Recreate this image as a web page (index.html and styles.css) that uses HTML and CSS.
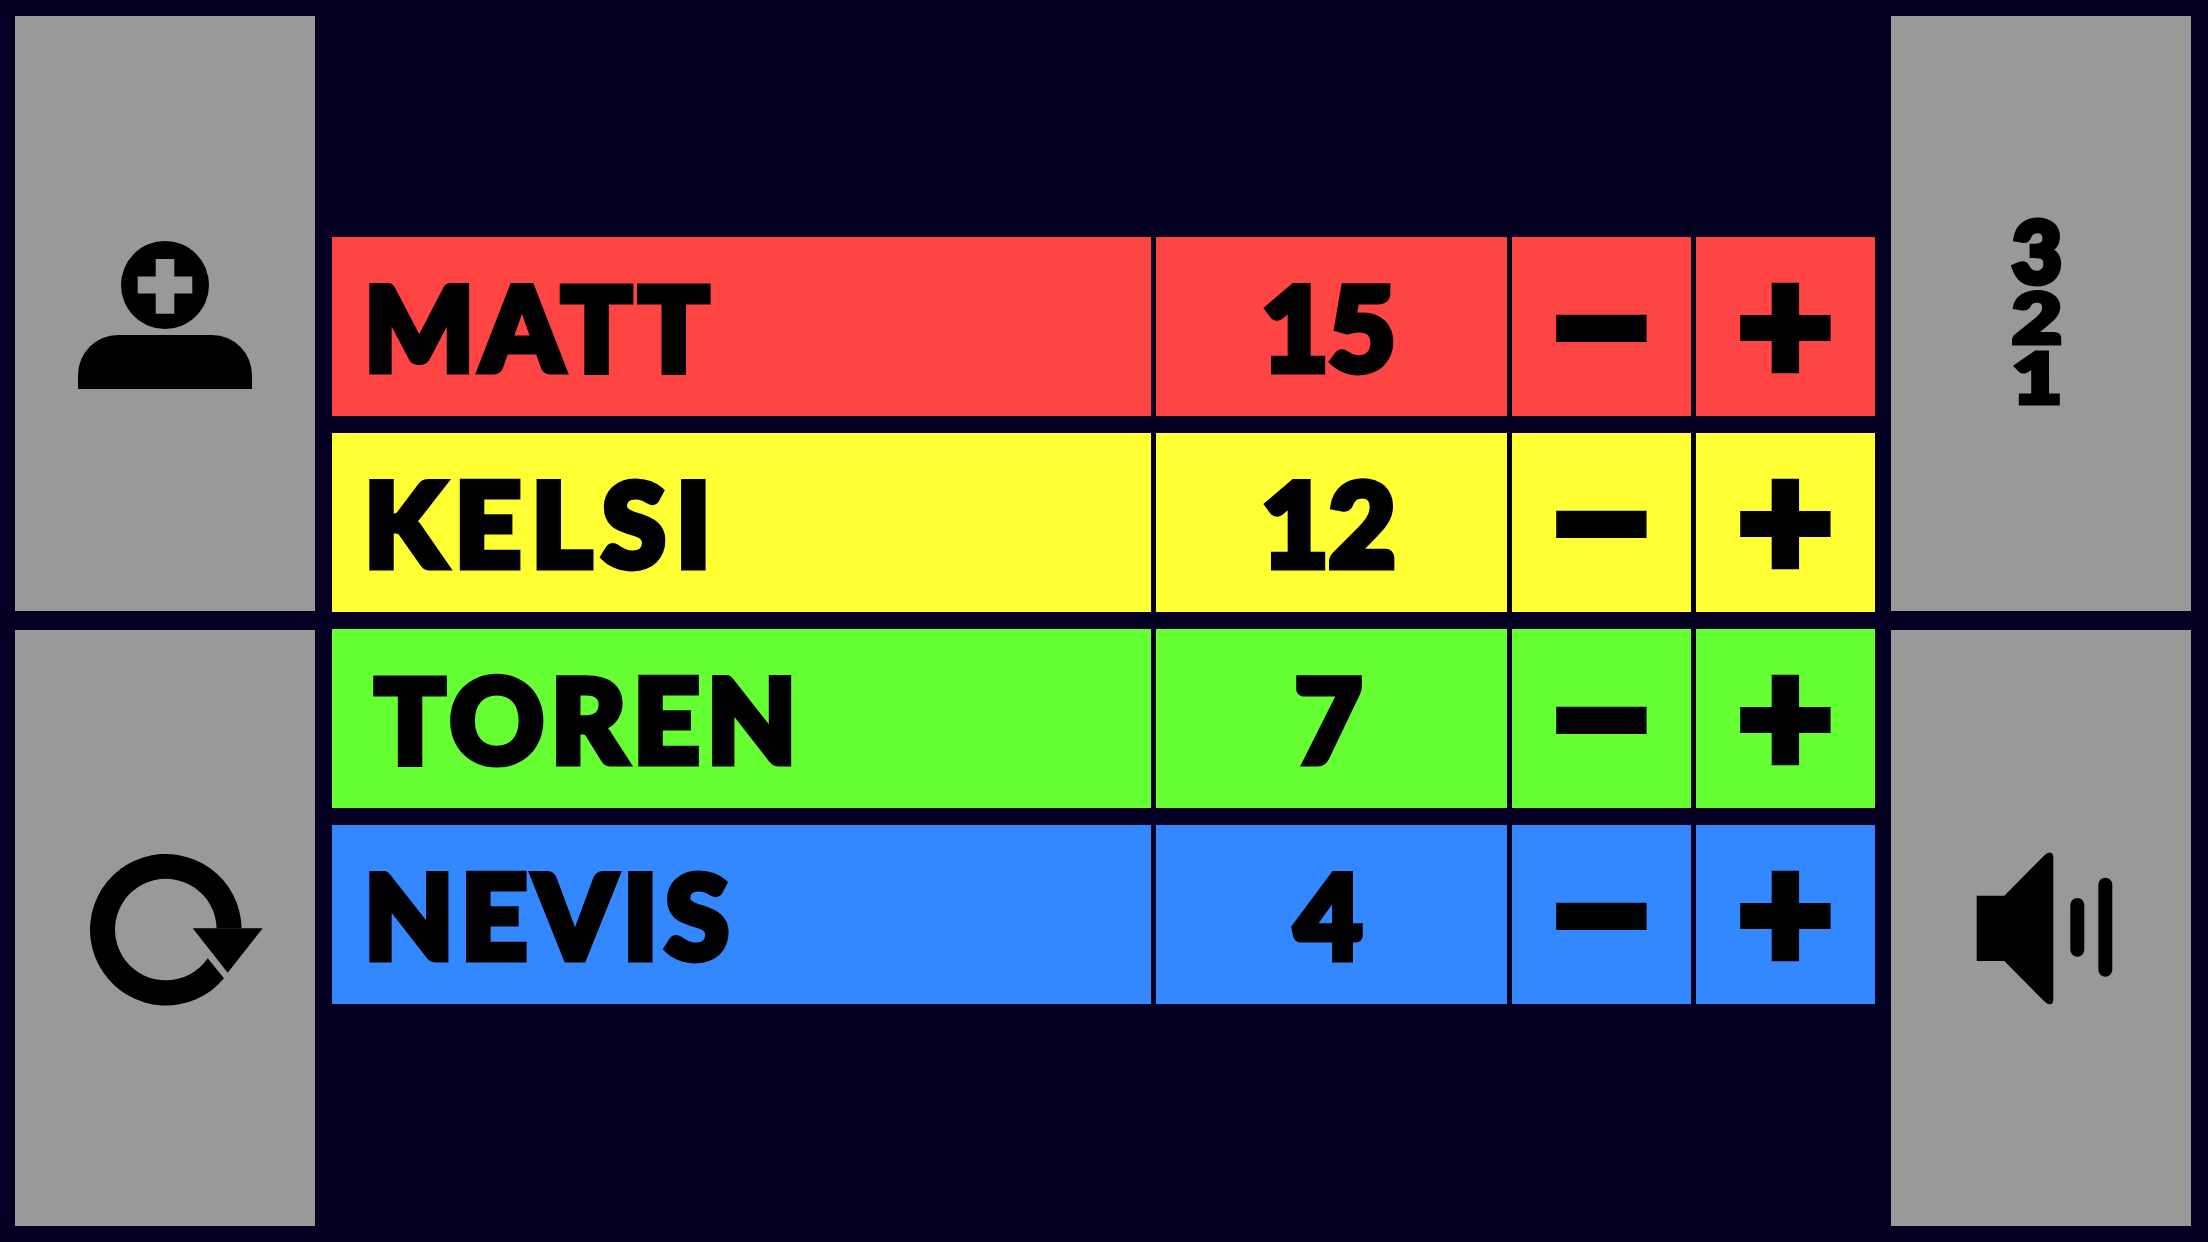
FILE: index.html
```html
<!DOCTYPE html>
<html lang="en">
    <head>
        <meta charset="UTF-8">
        <title>Scoreboard</title>
        <link rel="stylesheet" href="styles.css">
    </head>
    <body>
        <div class="side">
            <button class="panel">
                <svg class="icon" viewBox="-63 -225 300 595">
                    <circle cx="87" cy="44" r="44"/>
                    <path class="cut" d="M77.7 18H96.3V35.5H114.3V52.5H96.3V72.7H77.7V52.5H59.7V35.5H77.7Z"/>
                    <path d="M0 148V134A40 40 0 0 1 40 94H134A40 40 0 0 1 174 134V148Z"/>
                </svg>
            </button>
            <button class="panel panel-low">
                <svg class="icon" viewBox="-25 -190 300 596">
                    <path d="M201.6 108.3A75.8 75.8 0 1 0 184 158.3L167.7 138.3A50.8 50.8 0 1 1 176.6 108.3Z"/>
                    <path d="M152.7 108.3H222.7L187.7 152.7Z"/>
                </svg>
            </button>
        </div>
        <div class="board">
            <div class="row red">
                <div class="cell name">MATT</div>
                <div class="cell score">15</div>
                <div class="cell step">−</div>
                <div class="cell step">+</div>
            </div>
            <div class="row yellow">
                <div class="cell name name-wide">KELSI</div>
                <div class="cell score">12</div>
                <div class="cell step">−</div>
                <div class="cell step">+</div>
            </div>
            <div class="row green">
                <div class="cell name name-inset">TOREN</div>
                <div class="cell score">7</div>
                <div class="cell step">−</div>
                <div class="cell step">+</div>
            </div>
            <div class="row blue">
                <div class="cell name">NEVIS</div>
                <div class="cell score">4</div>
                <div class="cell step">−</div>
                <div class="cell step">+</div>
            </div>
        </div>
        <div class="side">
            <button class="panel">
                <div class="countdown">
                    <span class="digit">3</span>
                    <span class="digit digit-flat">2</span>
                    <span class="digit digit-flat">1</span>
                </div>
            </button>
            <button class="panel panel-low">
                <svg class="icon" viewBox="-49 -200 300 596">
                    <path d="M36.7 65.7H64.3L104.5 25.2Q107 22.5 110 22.5Q113.3 23 113.3 27V169.5Q113.3 174 110 174.3Q107 174.3 104.5 171.6L64.3 131H36.7Z"/>
                    <rect x="130.3" y="68" width="14" height="58.7" rx="7"/>
                    <rect x="158.3" y="47.7" width="14" height="99" rx="7"/>
                </svg>
            </button>
        </div>
    </body>
</html>
```

FILE: styles.css
```css
html, body { margin: 0; height: 100%; }
body {
    display: flex;
    padding: 16px 17px 16px 15px;
    box-sizing: border-box;
    height: 1242px;
    background: #030022;
    font-family: Lato, sans-serif;
    font-weight: 900;
    color: #000;
    overflow: hidden;
}
.side { display: flex; flex-direction: column; width: 300px; }
.panel {
    display: flex;
    align-items: center;
    justify-content: center;
    height: 595px;
    padding: 0;
    border: 0;
    background: #999;
    font: inherit;
    color: inherit;
}
.panel-low { height: 596px; margin-top: 19px; }
.icon { width: 300px; height: 100%; fill: #000; }
.icon .cut { fill: #999; }

.board {
    flex: 1;
    display: flex;
    flex-direction: column;
    justify-content: center;
    gap: 17px;
    margin: 0 16px 0 17px;
    padding-bottom: 1px;
}
.row { display: grid; grid-template-columns: 819px 351px 179px 179px; grid-template-rows: 179px; gap: 5px; }
.cell { display: flex; align-items: center; justify-content: center; background: var(--row); font-size: 116px; line-height: 1; -webkit-text-stroke: 7px #000; }
.name { justify-content: flex-start; padding-left: 32px; letter-spacing: 7px; }
.name-wide { letter-spacing: 10px; }
.name-inset { padding-left: 43px; }
.score { padding-right: 6px; box-sizing: border-box; }
.step { font-family: Inter, sans-serif; font-size: 172px; line-height: 100px; padding-bottom: 22px; box-sizing: border-box; -webkit-text-stroke: 0; }
.red { --row: #ff4444; }
.yellow { --row: #ffff33; }
.green { --row: #66ff33; }
.blue { --row: #3388ff; }

.countdown { display: flex; flex-direction: column; align-items: center; margin: 0 8px 9px 0; -webkit-text-stroke: 6px #000; }
.digit { display: block; font-size: 86px; line-height: 75px; }
.digit-flat { line-height: 60px; transform: scaleY(0.8); }
```
